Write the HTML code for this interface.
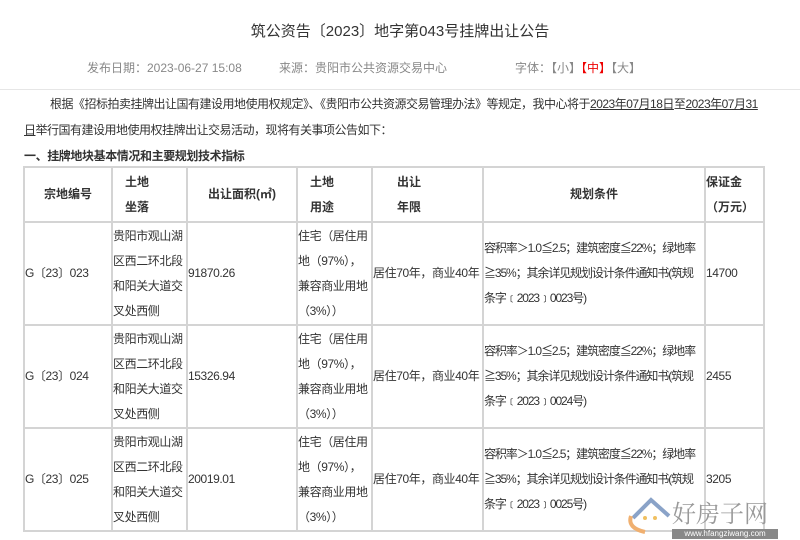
<!DOCTYPE html>
<html><head><meta charset="utf-8"><style>
body{margin:0;width:800px;height:540px;overflow:hidden;background:#fff;font-family:"Liberation Sans","Noto Sans CJK SC",sans-serif;color:#333;font-size:12px;position:relative}
.a{position:absolute;white-space:nowrap}
u{text-decoration:underline}
table{position:absolute;left:23px;top:166px;width:740px;border-collapse:collapse;table-layout:fixed}
td{border:2px solid #d4d4d4;padding:0;vertical-align:middle;line-height:25px;font-size:12px;color:#333;white-space:nowrap;overflow:hidden;letter-spacing:-0.4px}
td.p{letter-spacing:-1.1px}
th{border:2px solid #d4d4d4;font-weight:bold;font-size:12px;line-height:25px;color:#333;text-align:left;padding:0;overflow:hidden}
</style></head><body>
<div class="a" style="left:0;width:800px;text-align:center;top:20px;font-size:15px;color:#333">筑公资告〔2023〕地字第043号挂牌出让公告</div>
<div class="a" style="left:87px;top:59px;color:#888">发布日期：2023-06-27 15:08</div>
<div class="a" style="left:279px;top:59px;color:#888">来源：贵阳市公共资源交易中心</div>
<div class="a" style="left:515px;top:59px;color:#888">字体：【小】<span style="color:#e00">【中】</span>【大】</div>
<div class="a" style="left:0;top:89px;width:800px;height:1px;background:#e6e6e6"></div>
<div class="a" style="left:50px;top:95px;letter-spacing:-0.5px">根据《招标拍卖挂牌出让国有建设用地使用权规定》、《贵阳市公共资源交易管理办法》等规定，我中心将于<u>2023年07月18日</u>至<u>2023年07月31</u></div>
<div class="a" style="left:24px;top:121px;letter-spacing:-0.5px"><u>日</u>举行国有建设用地使用权挂牌出让交易活动，现将有关事项公告如下：</div>
<div class="a" style="left:24px;top:147px;font-weight:bold;letter-spacing:-0.4px">一、挂牌地块基本情况和主要规划技术指标</div>
<table>
<colgroup><col style="width:88px"><col style="width:75px"><col style="width:110px"><col style="width:75px"><col style="width:111px"><col style="width:222px"><col style="width:59px"></colgroup>
<tr style="height:55px"><th style="text-align:center">宗地编号</th><th style="padding-left:12px">土地<br>坐落</th><th style="text-align:center">出让面积(㎡)</th><th style="padding-left:12px">土地<br>用途</th><th style="padding-left:24px">出让<br>年限</th><th style="text-align:center">规划条件</th><th>保证金<br>（万元）</th></tr>
<tr style="height:103px"><td>G〔23〕023</td><td>贵阳市观山湖<br>区西二环北段<br>和阳关大道交<br>叉处西侧</td><td>91870.26</td><td>住宅（居住用<br>地（97%），<br>兼容商业用地<br>（3%））</td><td>居住70年，商业40年</td><td class="p">容积率＞1.0≦2.5；建筑密度≦22%；绿地率<br>≧35%；其余详见规划设计条件通知书(筑规<br>条字﹝2023﹞0023号)</td><td>14700</td></tr>
<tr style="height:103px"><td>G〔23〕024</td><td>贵阳市观山湖<br>区西二环北段<br>和阳关大道交<br>叉处西侧</td><td>15326.94</td><td>住宅（居住用<br>地（97%），<br>兼容商业用地<br>（3%））</td><td>居住70年，商业40年</td><td class="p">容积率＞1.0≦2.5；建筑密度≦22%；绿地率<br>≧35%；其余详见规划设计条件通知书(筑规<br>条字﹝2023﹞0024号)</td><td>2455</td></tr>
<tr style="height:103px"><td>G〔23〕025</td><td>贵阳市观山湖<br>区西二环北段<br>和阳关大道交<br>叉处西侧</td><td>20019.01</td><td>住宅（居住用<br>地（97%），<br>兼容商业用地<br>（3%））</td><td>居住70年，商业40年</td><td class="p">容积率＞1.0≦2.5；建筑密度≦22%；绿地率<br>≧35%；其余详见规划设计条件通知书(筑规<br>条字﹝2023﹞0025号)</td><td>3205</td></tr>
</table>
<svg class="a" style="left:625px;top:492px" width="50" height="42"><path d="M8 26 L26 8 L44 24" fill="none" stroke="#8aa3c8" stroke-width="4"/><path d="M6 24 Q2 36 20 40" fill="none" stroke="#f0b070" stroke-width="4"/><circle cx="20" cy="26" r="2" fill="#f0c060"/><circle cx="30" cy="26" r="2" fill="#f0c060"/></svg>
<div class="a" style="left:672px;top:494px;font-size:24px;color:#999;font-family:'Noto Serif CJK SC',serif">好房子网</div>
<div class="a" style="left:672px;top:529px;width:106px;height:10px;background:#888;color:#fff;font-size:8px;line-height:10px;text-align:center">www.hfangziwang.com</div>
</body></html>
